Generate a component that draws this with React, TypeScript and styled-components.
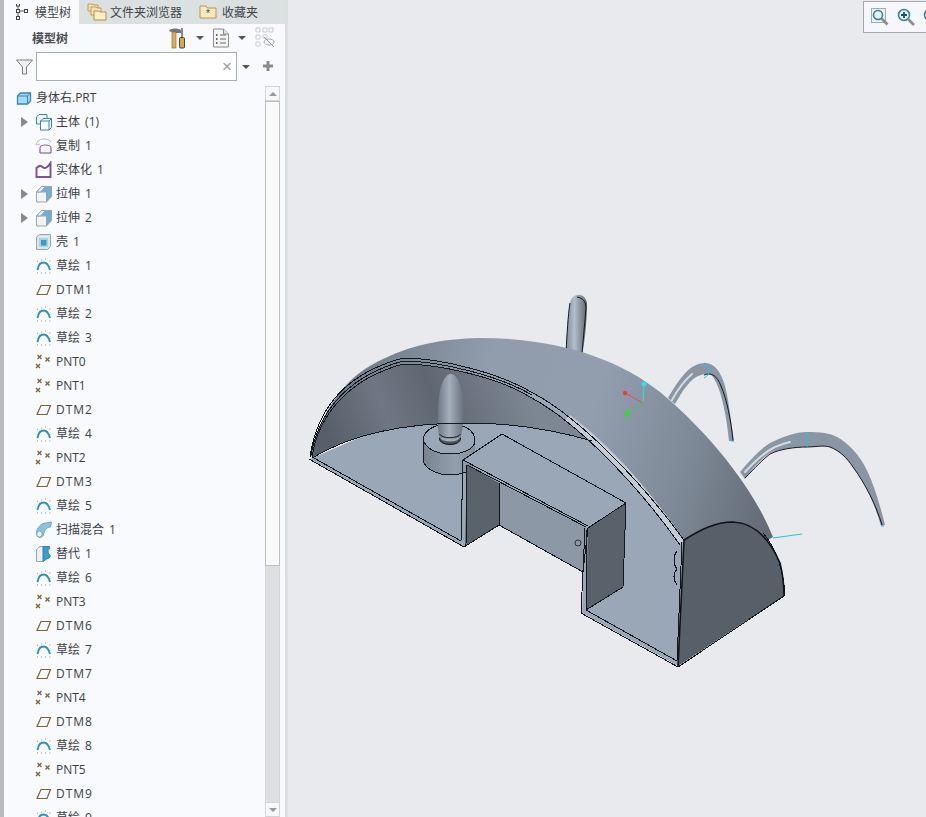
import React from 'react';
import styled, { createGlobalStyle } from 'styled-components';

type IconKind =
  | 'root'
  | 'body'
  | 'copy'
  | 'solidify'
  | 'extrude'
  | 'shell'
  | 'sketch'
  | 'datum'
  | 'point'
  | 'sweep'
  | 'flexible';

interface TreeItem {
  label: string;
  icon: IconKind;
  expandable?: boolean;
}

const TREE: TreeItem[] = [
  { label: '主体 (1)', icon: 'body', expandable: true },
  { label: '复制 1', icon: 'copy' },
  { label: '实体化 1', icon: 'solidify' },
  { label: '拉伸 1', icon: 'extrude', expandable: true },
  { label: '拉伸 2', icon: 'extrude', expandable: true },
  { label: '壳 1', icon: 'shell' },
  { label: '草绘 1', icon: 'sketch' },
  { label: 'DTM1', icon: 'datum' },
  { label: '草绘 2', icon: 'sketch' },
  { label: '草绘 3', icon: 'sketch' },
  { label: 'PNT0', icon: 'point' },
  { label: 'PNT1', icon: 'point' },
  { label: 'DTM2', icon: 'datum' },
  { label: '草绘 4', icon: 'sketch' },
  { label: 'PNT2', icon: 'point' },
  { label: 'DTM3', icon: 'datum' },
  { label: '草绘 5', icon: 'sketch' },
  { label: '扫描混合 1', icon: 'sweep' },
  { label: '替代 1', icon: 'flexible' },
  { label: '草绘 6', icon: 'sketch' },
  { label: 'PNT3', icon: 'point' },
  { label: 'DTM6', icon: 'datum' },
  { label: '草绘 7', icon: 'sketch' },
  { label: 'DTM7', icon: 'datum' },
  { label: 'PNT4', icon: 'point' },
  { label: 'DTM8', icon: 'datum' },
  { label: '草绘 8', icon: 'sketch' },
  { label: 'PNT5', icon: 'point' },
  { label: 'DTM9', icon: 'datum' },
  { label: '草绘 9', icon: 'sketch' },
];

const FeatureIcon = ({ kind }: { kind: IconKind }) => {
  switch (kind) {
    case 'root':
      return (
        <svg width="16" height="16" viewBox="0 0 16 16">
          <path d="M1.500 6l3-3h10v8l-3 3H1.500z" fill="#a5dcf2" stroke="#2f86b5" strokeWidth="1.300" />
          <path d="M1.500 6h10v8M11.500 6l3-3" fill="none" stroke="#2f86b5" />
        </svg>
      );
    case 'body':
      return (
        <svg width="18" height="18" viewBox="0 0 18 18">
          <path d="M1.500 4l2.500-2.500h8v9.500h-10.500z" fill="#eef4f8" stroke="#2f86b5" />
          <path d="M5.500 8l2.500-2.500h8.500v9l-2.500 2.500h-8.500z" fill="#fff" stroke="#2f86b5" />
          <path d="M5.500 8h8.500v9M14 8l2.500-2.500" fill="none" stroke="#2f86b5" />
        </svg>
      );
    case 'copy':
      return (
        <svg width="18" height="18" viewBox="0 0 18 18">
          <path d="M1 8c1-5 5-6 8-6 3 0 6 1 7 3" fill="none" stroke="#b6b6b6" />
          <path d="M1 8c2-1 3-1 4 0" fill="none" stroke="#b6b6b6" />
          <path d="M5 16v-5c0-2 2-3 5-3s6 1 6 3v5" fill="none" stroke="#8d5fa8" strokeWidth="1.200" />
          <path d="M5 16h11" stroke="#8d5fa8" strokeWidth="1.200" />
        </svg>
      );
    case 'solidify':
      return (
        <svg width="18" height="18" viewBox="0 0 18 18">
          <path d="M1.500 7c2-2 4-3 6-1 2 2 5 1 8-4v14h-14z" fill="#fff" stroke="#7a4f9e" strokeWidth="1.900" />
        </svg>
      );
    case 'extrude':
      return (
        <svg width="18" height="18" viewBox="0 0 18 18">
          <path d="M1.500 7l5-5.500h10v10l-5 5.500z" fill="#6fb0d2" stroke="#9aa4aa" />
          <path d="M1.500 7h10v10h-10z" fill="#f3f3f3" stroke="#9aa4aa" />
          <path d="M1.500 7l5-5.500h4l-5 5.500z" fill="#e4f2f8" stroke="#9aa4aa" />
        </svg>
      );
    case 'shell':
      return (
        <svg width="18" height="18" viewBox="0 0 18 18">
          <path d="M1.500 4l3-2.500h11v12l-3 3h-11z" fill="#dfe5e8" stroke="#9aa4aa" />
          <rect x="4" y="5" width="9" height="9" fill="#a9d3e6" />
          <rect x="6" y="7" width="5.500" height="5.500" fill="#3d9ac8" />
        </svg>
      );
    case 'sketch':
      return (
        <svg width="18" height="18" viewBox="0 0 18 18">
          <path d="M2 4h.8M6 3h.8M10 2h.8M14.500 4h.8M2 16h.8M6 16h.8M10 16h.8M14.500 16h.8" stroke="#777" />
          <path d="M2.500 13c1-6 4-7.500 6-7.500s5 1.500 6.500 7.500" fill="none" stroke="#2f8fc0" strokeWidth="1.800" />
        </svg>
      );
    case 'datum':
      return (
        <svg width="18" height="18" viewBox="0 0 18 18">
          <path d="M6 4.500h9.500l-3.500 9h-10z" fill="none" stroke="#7a6334" strokeWidth="1.200" />
        </svg>
      );
    case 'point':
      return (
        <svg width="18" height="18" viewBox="0 0 18 18">
          <path
            d="M2.500 2l4 4M6.500 2l-4 4M10.500 4.500l4 4M14.500 4.500l-4 4M1 11l4 4M5 11l-4 4"
            stroke="#7a6334"
            strokeWidth="1.300"
          />
        </svg>
      );
    case 'sweep':
      return (
        <svg width="18" height="18" viewBox="0 0 18 18">
          <path d="M1.500 12c0-5 5-10 9-10l6-1-1 5c-4 0-6 3-7 8-2 4-7 3-7-2z" fill="#8cc4e0" stroke="#6fa9c6" />
          <ellipse cx="4.500" cy="13" rx="2.800" ry="3" fill="#f2f6f8" stroke="#6fa9c6" />
        </svg>
      );
    case 'flexible':
      return (
        <svg width="18" height="18" viewBox="0 0 18 18">
          <path d="M1.500 5l3-3.500h4v15h-7z" fill="#eef1f3" stroke="#9aa4aa" />
          <path d="M8 1.500h6.500c1 2-2 3.500-1.500 5.500.5 2 3 3 2 5-1 2-3 1-4 2.500l-3 2z" fill="#3b9bd0" stroke="#2f86b5" />
        </svg>
      );
  }
};

const Model = () => (
  <ModelSvg viewBox="288 0 638 817">
    <defs>
      <linearGradient id="dome" gradientUnits="userSpaceOnUse" x1="340" y1="400" x2="770" y2="520">
        <stop offset="0" stopColor="#6f7a86" />
        <stop offset="0.3" stopColor="#919dac" />
        <stop offset="0.55" stopColor="#929eae" />
        <stop offset="0.78" stopColor="#7f8a98" />
        <stop offset="1" stopColor="#626b76" />
      </linearGradient>
      <linearGradient id="wall" gradientUnits="userSpaceOnUse" x1="330" y1="440" x2="520" y2="370">
        <stop offset="0" stopColor="#575f6a" />
        <stop offset="0.3" stopColor="#6e7783" />
        <stop offset="0.55" stopColor="#5f6772" />
        <stop offset="1" stopColor="#7d8794" />
      </linearGradient>
      <linearGradient id="bullet" x1="0" y1="0" x2="1" y2="0">
        <stop offset="0" stopColor="#6e7986" />
        <stop offset="0.45" stopColor="#a4afbd" />
        <stop offset="1" stopColor="#69737f" />
      </linearGradient>
      <linearGradient id="cylinder" x1="0" y1="0" x2="1" y2="0">
        <stop offset="0" stopColor="#78838f" />
        <stop offset="0.6" stopColor="#949fae" />
        <stop offset="1" stopColor="#85909d" />
      </linearGradient>
      <linearGradient id="hornUp" x1="0" y1="0" x2="1" y2="0">
        <stop offset="0" stopColor="#7f8a97" />
        <stop offset="0.4" stopColor="#b4beca" />
        <stop offset="1" stopColor="#5d6671" />
      </linearGradient>
    </defs>

    {/* horns behind the dome */}
    <path d="M566 352 C567 335 568 315 570 303 C572 292 585 292 587 303 C587 320 585 340 582 356Z" fill="url(#hornUp)" />
    <path d="M566 352 C567 335 568 315 570 303" fill="none" stroke="#14181c" />
    <path d="M577 297 C583 298 586 302 586 308 L582 354" fill="none" stroke="#14181c" />

    <HornBody d="M668 398 C680 378 690 363 705 363 C718 363 725 380 728 400 L734 441 L729 441 C727 420 722 390 713 377 C710 373 705 374 701 375 C690 378 682 392 675 404Z" />
    <HornGlint d="M672 400 C678 389 684 381 692 374" />
    <path d="M704 375 C712 372 717 376 721 386 C727 400 731 420 733 441" fill="none" stroke="#14181c" />

    <HornBody d="M740 472 C750 460 760 449 770 443 C785 436 795 432 807 432 C820 432 830 433 837 437 C850 444 858 455 863 463 C873 480 880 505 885 525 L881 526 C875 505 865 482 853 467 C847 458 840 451 830 447 C822 445 815 447 807 447 C795 447 780 449 770 453 C760 460 752 469 745 479Z" />
    <HornGlint d="M745 472 C755 461 765 452 775 447 C780 445 785 443 790 442" />
    <path d="M745 478 C755 468 762 460 770 454 C780 449 795 447 807 447 C815 447 823 445 830 447 C840 451 847 458 853 467 C866 485 876 505 882 525" fill="none" stroke="#14181c" />

    {/* outer dome */}
    <path
      d="M310 457 C318 420 340 380 377 362 C410 345 440 339 480 338 C560 338 620 360 660 392 C700 425 750 480 773 537 L733 560 L684 540 L400 400Z"
      fill="url(#dome)"
    />

    {/* floor */}
    <path
      d="M310 459 L464 547 L499 525 L583 572 L582 613 L678 666 L684 540 C640 480 580 418 533 393 L400 420Z"
      fill="#9aa7b6"
    />

    {/* interior wall */}
    <path
      d="M312 458 C318 418 345 380 403 364 C440 364 500 378 530 397 C555 410 575 425 592 441 C555 430 510 423 467 423 C400 423 350 435 312 458Z"
      fill="url(#wall)"
    />

    {/* cylinder and bullet */}
    <path d="M423 439 V460 C425 470 440 475 449 475 C462 475 475 470 475 460 V439Z" fill="url(#cylinder)" />
    <ellipse cx="449" cy="439" rx="26" ry="15" fill="#9aa7b6" />
    <ModelEdges>
      <path d="M423 439 V460 C425 470 440 475 449 475 C458 475 465 473 470 470" />
      <path d="M423 439 C425 428 438 424 449 424 C464 424 475 430 475 441 C475 448 465 454 449 454 C436 454 425 448 423 439" />
    </ModelEdges>
    <ellipse cx="450" cy="439" rx="10.500" ry="5.500" fill="#4a525c" stroke="#111" />
    <ellipse cx="450" cy="437" rx="10" ry="4.500" fill="#a2adba" />
    <path d="M439 436 C436 415 438 374 451 374 C463 374 466 415 461 436 C456 441 444 441 439 436Z" fill="url(#bullet)" />
    <path d="M439.500 434 C442 439 458 439 460.500 434" fill="none" stroke="#14171b" />

    {/* box */}
    <path d="M463 460 L502 434 L626 503 L588 528Z" fill="#9aa7b6" />
    <path d="M499 483 L587 528 L583 572 L499 525Z" fill="#8c98a6" />
    <path d="M467 465 L499 483 L499 525 L465 546Z" fill="#5a626c" />
    <path d="M588 528 L626 503 L623 587 L586 610Z" fill="#59616b" />

    {/* end face */}
    <path
      d="M678 666 L684 540 C700 530 715 522 733 522 C755 523 770 540 780 563 C783 575 784 585 784 596Z"
      fill="#575f69"
    />

    {/* thin rim highlight */}
    <path d="M570 415 C610 445 650 490 684 540 L680 545 C645 495 605 450 565 420Z" fill="#c4ccd5" />

    <ModelEdges>
      <path d="M310 457 C316 415 340 375 403 358 C440 358 500 373 533 393 C580 418 640 480 684 540" />
      <path d="M312 457 C318 418 345 380 403 364 C440 364 500 378 530 397 C577 422 637 484 680 545" />
      <path d="M311 455 C318 417 342 378 403 361 C440 361 500 376 532 395" />
      <path d="M312 458 C350 435 400 423 467 423 C510 423 555 430 592 441" />

      <path d="M309 459 L464 547 L499 525" />
      <path d="M314 458 L461 541 L463 460 L502 434 L626 503 L588 528 L583 572" />
      <path d="M467 465 L586 527" />
      <path d="M463 460 L588 526" />
      <path d="M467 465 L466 545" />
      <path d="M499 483 L499 525 L583 572" />
      <path d="M585 528 L581 613 L678 667" />
      <path d="M586 530 L586 610 L677 661 L682 542" />
      <path d="M626 503 L623 587 L586 610" />
      <path d="M678 667 L784 596" />
      <path d="M785 596 C784 575 778 550 763 533" />
      <path d="M677 551 C673 556 673 564 677 569 C673 573 673 580 677 585" />
    </ModelEdges>
    <circle cx="578" cy="543" r="3" fill="none" stroke="#14171b" strokeWidth="0.800" />
    <HeavyEdges>
      <path d="M684 540 L678 666" />
      <path d="M684 540 C700 530 715 522 733 522 C755 523 770 540 780 563 C783 575 784 585 784 596" />
    </HeavyEdges>

    {/* sketch curves and csys */}
    <CyanLines>
      <path d="M773 538 L802 534" />
      <path d="M704 363 C711 365 711 375 704 378" />
      <path d="M807 432 L807 447" />
      <path d="M731 441 H734 M881 526 H884" />
    </CyanLines>
    <path d="M643 403 L644 384" stroke="#39d6e6" />
    <path d="M643 403 L625 393" stroke="#e8484c" />
    <path d="M643 403 L627 414" stroke="#38cf4a" />
    <circle cx="644" cy="384" r="2.500" fill="#2fe0ee" />
    <circle cx="625" cy="393" r="2.200" fill="#f03a3a" />
    <circle cx="627" cy="414" r="2.600" fill="#22e22e" />
  </ModelSvg>
);

const App = () => (
  <>
    <GlobalStyle />
    <Shell>
      <Gutter />
      <Panel>
        <TabBar>
          <Tab $active $gap={6}>
            <svg width="14" height="17" viewBox="0 0 14 17">
              <path d="M3 1v12M3 7h6" stroke="#555" fill="none" />
              <rect x="1.500" y="-1" width="3" height="3" fill="#fff" stroke="#444" />
              <rect x="1.500" y="5.500" width="3" height="3" fill="#fff" stroke="#444" />
              <rect x="1.500" y="12.500" width="3" height="3" fill="#fff" stroke="#444" />
              <rect x="9.500" y="5.500" width="3" height="3" fill="#fff" stroke="#444" />
            </svg>
            模型树
          </Tab>
          <Tab $gap={3}>
            <svg width="20" height="20" viewBox="0 0 20 20">
              <path d="M1 2h5l1 1h4v6h-10z" fill="#f3dfb0" stroke="#c39a4e" />
              <path d="M4 5h5l1 1h4v7h-10z" fill="#f6e5bd" stroke="#c39a4e" />
              <path d="M7 9h5l1 1h6v8h-12z" fill="#fbeecb" stroke="#b98d3f" />
            </svg>
            文件夹浏览器
          </Tab>
          <Tab $gap={5}>
            <svg width="18" height="16" viewBox="0 0 18 16">
              <path d="M1 2h6l1.500 2h8.500v10h-16z" fill="#f8e9bf" stroke="#bd9447" />
              <text x="9" y="13" fontSize="11" textAnchor="middle" fill="#1c5f8a" fontFamily="Liberation Sans">*</text>
            </svg>
            收藏夹
          </Tab>
        </TabBar>

        <PanelHeader>
          <PanelTitle>模型树</PanelTitle>
          <HeaderTools>
            <svg width="20" height="22" viewBox="0 0 20 22">
              <path d="M1 4 C3 1 8 1 13 3 V6 H8 L6 5 H3Z" fill="#777" />
              <rect x="4" y="5" width="4" height="16" fill="#d7ad62" stroke="#8f6f37" strokeWidth="0.700" />
              <rect x="13" y="1" width="2" height="10" fill="#8a8a8a" />
              <rect x="11.500" y="10.500" width="5" height="10.500" rx="1" fill="#d6a84f" stroke="#222" strokeWidth="0.800" />
            </svg>
            <Caret />
            <svg width="18" height="20" viewBox="0 0 18 20">
              <path d="M1.500 1h10l5 5v13h-15z" fill="#f4f4f4" stroke="#8c8c8c" />
              <path d="M11.500 1v5h5" fill="#e3e3e3" stroke="#8c8c8c" />
              <path d="M8 7h6M8 11h6M8 15h6" stroke="#666" />
              <path d="M4 7h1.500M4 11h1.500M4 15h1.500" stroke="#666" strokeWidth="2" />
            </svg>
            <Caret />
            <svg width="22" height="22" viewBox="0 0 22 22">
              <path d="M2 1h4v4h-4zM2 8h4v4h-4zM2 15h4v4h-4zM9 1h4v4h-4zM15 1h4v4h-4zM9 8h4v3h-4z" fill="none" stroke="#c9cccc" />
              <ellipse cx="15" cy="15" rx="5" ry="3" fill="none" stroke="#a6a9a9" />
              <path d="M10 10l10 10" stroke="#8f9292" />
            </svg>
          </HeaderTools>
        </PanelHeader>

        <FilterRow>
          <svg width="17" height="16" viewBox="0 0 17 16">
            <path d="M.5 1h16l-6 7v7h-4v-7z" fill="#f1f1f1" stroke="#7f7f7f" />
          </svg>
          <SearchBox>
            <ClearMark>×</ClearMark>
          </SearchBox>
          <Caret />
          <PlusMark>
            <svg width="12" height="12" viewBox="0 0 12 12">
              <path d="M6 1v10M1 6h10" stroke="#8b8b8b" strokeWidth="3" />
            </svg>
          </PlusMark>
        </FilterRow>

        <TreeArea>
          <TreeList>
            <RootRow>
              <FeatureIcon kind="root" />
              <RowLabel>身体右.PRT</RowLabel>
            </RootRow>
            {TREE.map((item, index) => (
              <TreeRow key={index}>
                <Expander>{item.expandable && <ExpanderArrow />}</Expander>
                <RowIcon>
                  <FeatureIcon kind={item.icon} />
                </RowIcon>
                <RowLabel $wide={item.icon === 'datum'}>{item.label}</RowLabel>
              </TreeRow>
            ))}
          </TreeList>
          <ScrollBar>
            <ScrollButton>
              <ScrollArrow />
            </ScrollButton>
            <ScrollThumb />
            <ScrollTrack />
            <ScrollButton>
              <ScrollArrow $down />
            </ScrollButton>
          </ScrollBar>
        </TreeArea>
      </Panel>
      <Splitter />
      <Canvas>
        <Model />
        <ViewToolbar>
          <svg width="20" height="20" viewBox="0 0 20 20">
            <rect x="1.500" y="1.500" width="14" height="14" fill="#eef1f3" stroke="#a9a9a9" />
            <circle cx="8" cy="8" r="4.500" fill="#e6f4f9" stroke="#2f7f9f" strokeWidth="1.500" />
            <path d="M11.500 11.500l6 6" stroke="#8c8c8c" strokeWidth="2.600" />
          </svg>
          <svg width="20" height="20" viewBox="0 0 20 20">
            <circle cx="8" cy="8" r="5.500" fill="#e6f4f9" stroke="#2f7f9f" strokeWidth="1.500" />
            <path d="M8 5v6M5 8h6" stroke="#164f70" strokeWidth="1.800" />
            <path d="M12 12l6 6" stroke="#8c8c8c" strokeWidth="2.600" />
          </svg>
          <svg width="20" height="20" viewBox="0 0 20 20">
            <circle cx="8" cy="8" r="5.500" fill="#e6f4f9" stroke="#2f7f9f" strokeWidth="1.500" />
          </svg>
        </ViewToolbar>
      </Canvas>
    </Shell>
  </>
);

export default App;

const GlobalStyle = createGlobalStyle`
  html, body {
    margin: 0;
    padding: 0;
    height: 100%;
    overflow: hidden;
    background: #e8eaee;
  }
  body {
    font-family: "Open Sans", "Noto Sans CJK SC", sans-serif;
    font-size: 12px;
    color: #3c4046;
  }
`;

const Shell = styled.div`
  display: flex;
  height: 100vh;
  overflow: hidden;
`;

const Gutter = styled.div`
  flex: 0 0 4px;
  background: #babdc0;
`;

const Panel = styled.div`
  flex: 0 0 281px;
  display: flex;
  flex-direction: column;
  background: #f8fafd;
  min-height: 0;
`;

const Splitter = styled.div`
  flex: 0 0 3px;
  background: #dcdfe2;
`;

const TabBar = styled.div`
  display: flex;
  flex: 0 0 24px;
  background: #dbe1e1;
`;

const Tab = styled.div<{ $active?: boolean; $gap: number }>`
  display: flex;
  align-items: center;
  height: 24px;
  padding: ${(p) => (p.$active ? '0 8px 0 11px' : '0 9px 0 8px')};
  gap: ${(p) => p.$gap}px;
  background: ${(p) => (p.$active ? '#f8fafd' : 'transparent')};
  color: #40444a;
  white-space: nowrap;
  overflow: hidden;
`;

const PanelHeader = styled.div`
  display: flex;
  align-items: center;
  justify-content: space-between;
  flex: 0 0 28px;
  padding: 0 9px 0 28px;
`;

const PanelTitle = styled.span`
  font-weight: 700;
  color: #4a4e54;
`;

const HeaderTools = styled.div`
  display: flex;
  align-items: center;
  gap: 8px;
`;

const Caret = styled.span`
  width: 0;
  height: 0;
  border-left: 4px solid transparent;
  border-right: 4px solid transparent;
  border-top: 4px solid #555;
`;

const FilterRow = styled.div`
  display: flex;
  align-items: center;
  flex: 0 0 29px;
  padding-left: 12px;
  gap: 3px;
  & > ${Caret} {
    margin-left: 2px;
  }
`;

const SearchBox = styled.div`
  flex: 0 0 201px;
  height: 29px;
  box-sizing: border-box;
  display: flex;
  align-items: center;
  justify-content: flex-end;
  padding-right: 4px;
  border: 1px solid #a6b0b0;
  background: #fff;
`;

const ClearMark = styled.span`
  font-family: "Liberation Sans", sans-serif;
  font-size: 17px;
  color: #9a9a9a;
`;

const PlusMark = styled.span`
  display: flex;
  margin-left: 9px;
  margin-top: -1px;
`;

const TreeArea = styled.div`
  display: flex;
  flex: 1;
  min-height: 0;
  margin-top: 5px;
  overflow: hidden;
`;

const TreeList = styled.div`
  flex: 0 0 261px;
  overflow: hidden;
`;

const TreeRow = styled.div`
  display: flex;
  align-items: center;
  height: 24px;
  padding-left: 16px;
  white-space: nowrap;
`;

const RootRow = styled(TreeRow)`
  gap: 4px;
  padding-left: 12px;
`;

const Expander = styled.span`
  display: flex;
  flex: 0 0 15px;
`;

const ExpanderArrow = styled.span`
  width: 0;
  height: 0;
  margin-left: 1px;
  border-top: 5px solid transparent;
  border-bottom: 5px solid transparent;
  border-left: 7px solid #888;
`;

const RowIcon = styled.span`
  display: flex;
  flex: 0 0 18px;
  margin-right: 3px;
`;

const RowLabel = styled.span<{ $wide?: boolean }>`
  line-height: 24px;
  word-spacing: 2px;
  letter-spacing: ${(p) => (p.$wide ? '1px' : '0')};
`;

const ScrollBar = styled.div`
  flex: 0 0 15px;
  display: flex;
  flex-direction: column;
  background: #dedfe0;
  box-shadow: inset 1px 0 0 #d2d4d5, inset -1px 0 0 #d2d4d5;
`;

const ScrollButton = styled.div`
  flex: 0 0 15px;
  display: flex;
  align-items: center;
  justify-content: center;
  box-sizing: border-box;
  border: 1px solid #d2d4d5;
  background: #f6f7f8;
`;

const ScrollArrow = styled.span<{ $down?: boolean }>`
  width: 0;
  height: 0;
  border-left: 4px solid transparent;
  border-right: 4px solid transparent;
  ${(p) => (p.$down ? 'border-top: 4px solid #999;' : 'border-bottom: 4px solid #999;')}
`;

const ScrollThumb = styled.div`
  flex: 0 0 465px;
  box-sizing: border-box;
  border: 1px solid #bcbfc1;
  background: #f9f9f9;
`;

const ScrollTrack = styled.div`
  flex: 1;
`;

const Canvas = styled.div`
  position: relative;
  flex: 1;
  min-width: 0;
  background: #e8eaee;
`;

const ModelSvg = styled.svg`
  display: block;
  width: 638px;
  height: 817px;
  stroke-linejoin: miter;
`;

const HornBody = styled.path`
  fill: #8a96a4;
`;

const HornGlint = styled.path`
  fill: none;
  stroke: #d3dae2;
  stroke-width: 2;
  stroke-linecap: round;
`;

const ModelEdges = styled.g`
  fill: none;
  stroke: #14171b;
  stroke-width: 1;
  shape-rendering: crispEdges;
`;

const HeavyEdges = styled.g`
  fill: none;
  stroke: #101316;
  stroke-width: 1.6;
`;

const CyanLines = styled.g`
  fill: none;
  stroke: #1cc4e6;
  stroke-width: 1;
`;

const ViewToolbar = styled.div`
  position: absolute;
  top: 1px;
  left: 575px;
  width: 70px;
  height: 32px;
  box-sizing: border-box;
  display: flex;
  align-items: center;
  gap: 6px;
  padding-left: 6px;
  background: #f5f7fa;
  border: 1px solid #a9a9a9;
  overflow: hidden;
  & > svg {
    flex: 0 0 20px;
  }
`;
